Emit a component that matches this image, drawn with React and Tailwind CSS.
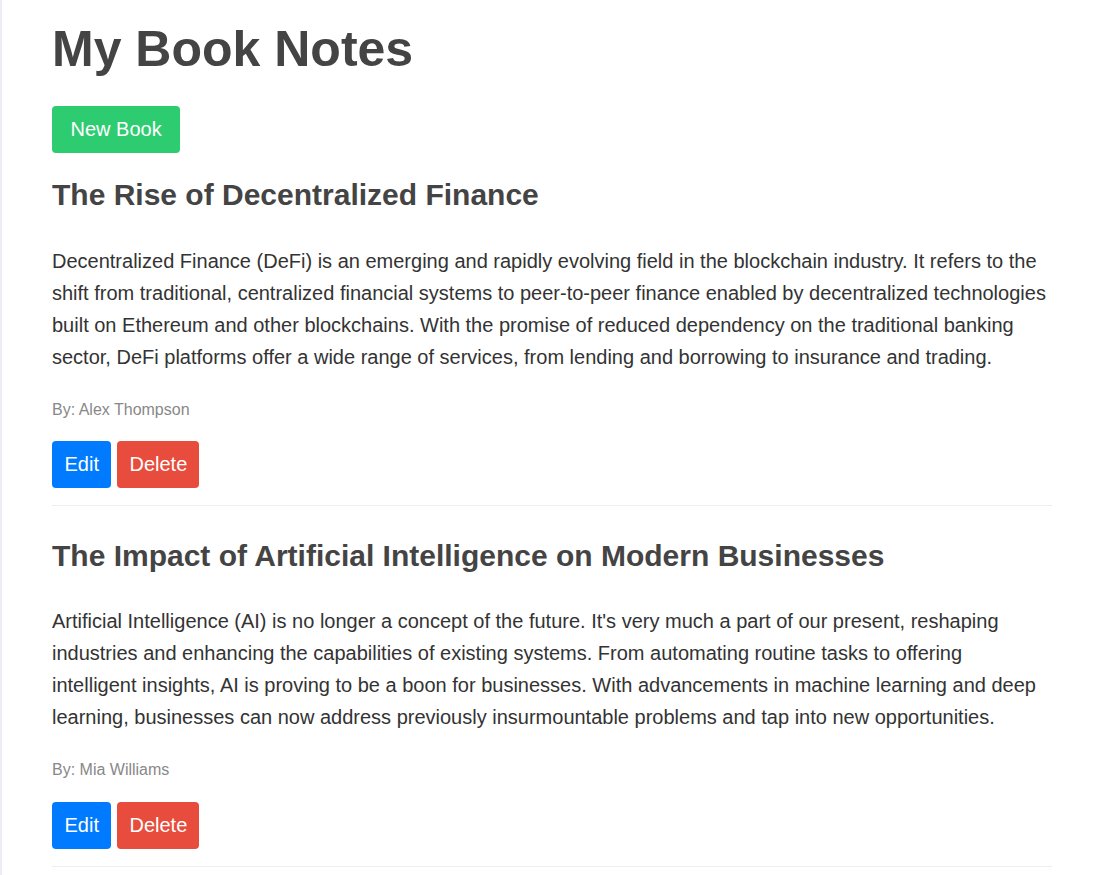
import React from 'react';

const books = [
  {
    id: 1,
    title: 'The Rise of Decentralized Finance',
    content:
      'Decentralized Finance (DeFi) is an emerging and rapidly evolving field in the blockchain industry. It refers to the shift from traditional, centralized financial systems to peer-to-peer finance enabled by decentralized technologies built on Ethereum and other blockchains. With the promise of reduced dependency on the traditional banking sector, DeFi platforms offer a wide range of services, from lending and borrowing to insurance and trading.',
    author: 'Alex Thompson',
  },
  {
    id: 2,
    title: 'The Impact of Artificial Intelligence on Modern Businesses',
    content:
      "Artificial Intelligence (AI) is no longer a concept of the future. It's very much a part of our present, reshaping industries and enhancing the capabilities of existing systems. From automating routine tasks to offering intelligent insights, AI is proving to be a boon for businesses. With advancements in machine learning and deep learning, businesses can now address previously insurmountable problems and tap into new opportunities.",
    author: 'Mia Williams',
  },
];

const BookItem = ({ book, first }) => (
  <div className={first ? 'pt-[25px]' : 'pt-[33px]'}>
    <h2 className="text-[30px] font-bold leading-[34.5px] text-[#444]">{book.title}</h2>
    <p className="mt-[32px] text-[20px] leading-[32px] text-[#333]">{book.content}</p>
    <p className="mt-[28px] text-[16px] leading-[18.4px] text-[#888]">By: {book.author}</p>
    <div className="mt-[22px] flex gap-[6px]">
      <button className="rounded bg-[#007bff] px-[12.5px] py-3 text-[20px] leading-[23px] text-white">Edit</button>
      <button className="rounded bg-[#e74c3c] px-[12px] py-3 text-[20px] leading-[23px] text-white">Delete</button>
    </div>
    <div className="mt-[17px] border-t border-[#eee]" />
  </div>
);

export default function App() {
  return (
    <div
      className="min-h-[875px] border-l-2 border-[#ececf2] bg-white pl-[50px]"
      style={{ fontFamily: '"Liberation Sans", Arial, sans-serif' }}
    >
      <div className="w-[1000px]">
        <h1 className="pt-[21px] text-[50px] font-bold leading-[57.5px] text-[#444]">My Book Notes</h1>
        <button className="mt-[27.5px] rounded bg-[#2ecc71] px-[18.5px] py-3 text-[20px] leading-[23px] text-white">
          New Book
        </button>
        {books.map((book, i) => (
          <BookItem key={book.id} book={book} first={i === 0} />
        ))}
      </div>
    </div>
  );
}
